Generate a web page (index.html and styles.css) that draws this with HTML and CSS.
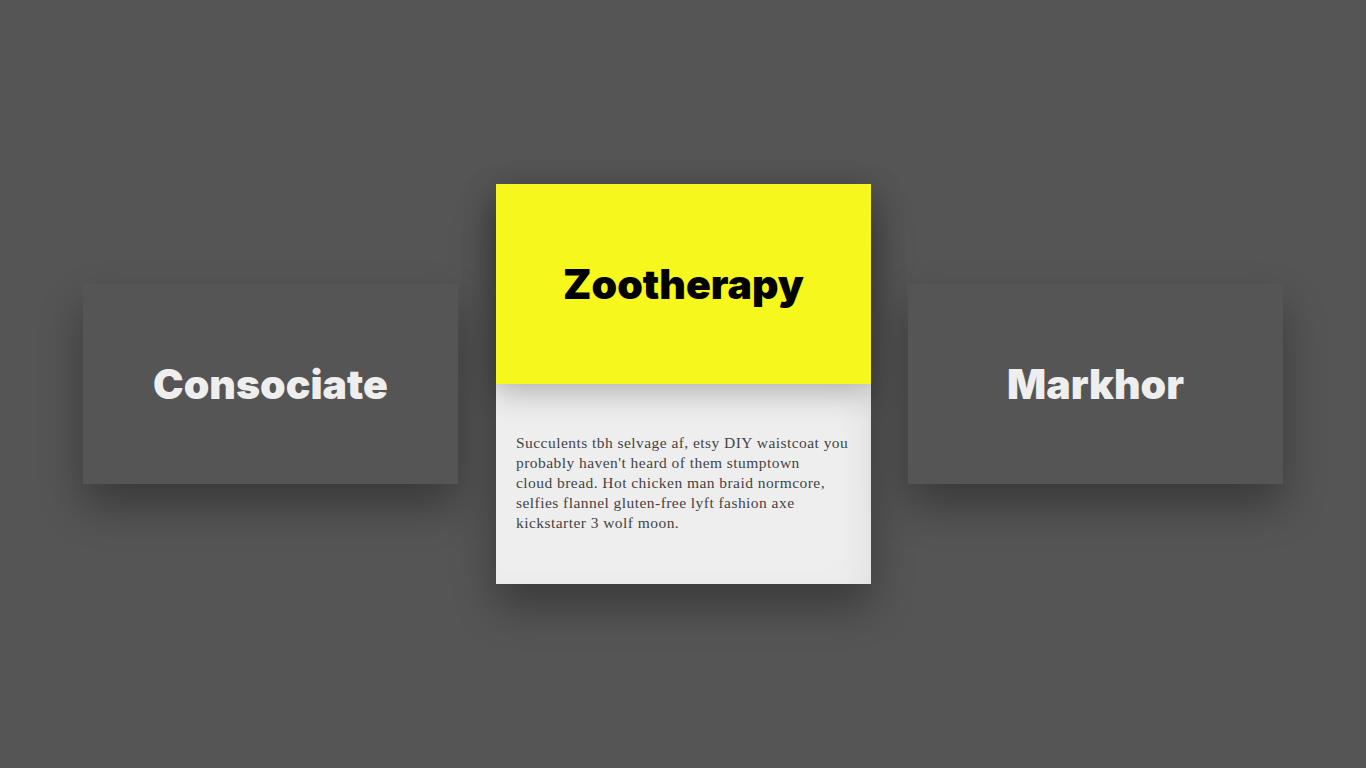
FILE: index.html
```html
<!DOCTYPE html>
<html lang="en">
<head>
<meta charset="utf-8">
<title>Cards</title>
<link rel="stylesheet" href="styles.css">
</head>
<body>
<main class="stage">
  <section class="card card-side">
    <header class="card-head"><h2>Consociate</h2></header>
  </section>
  <section class="card card-active">
    <header class="card-head head-yellow"><h2>Zootherapy</h2></header>
    <div class="card-body">
      <p>Succulents tbh selvage af, etsy DIY waistcoat you<br> probably haven't heard of them stumptown<br> cloud bread. Hot chicken man braid normcore,<br> selfies flannel gluten-free lyft fashion axe<br> kickstarter 3 wolf moon.</p>
    </div>
  </section>
  <section class="card card-side">
    <header class="card-head"><h2>Markhor</h2></header>
  </section>
</main>
</body>
</html>
```
FILE: styles.css
```css
html, body {
  margin: 0;
  padding: 0;
  height: 100%;
}
body {
  background: #555555;
  font-family: "Inter", "Liberation Sans", sans-serif;
}
.stage {
  height: 768px;
  display: flex;
  justify-content: center;
  align-items: center;
  gap: 37px;
}
.card {
  width: 375px;
  display: flex;
  flex-direction: column;
  box-shadow: 0 22px 40px rgba(0, 0, 0, 0.32);
}
.card-active {
  margin-left: 1px;
}
.card-head {
  height: 200px;
  display: flex;
  align-items: center;
  justify-content: center;
  background: #555555;
  position: relative;
  z-index: 1;
}
.card-head h2 {
  margin: 0;
  font-family: "Inter", sans-serif;
  font-weight: 900;
  font-size: 41px;
  color: #eeeeee;
  letter-spacing: 0;
}
.head-yellow {
  background: #f6f71d;
  box-shadow: 0 8px 30px rgba(0, 0, 0, 0.25);
}
.head-yellow h2 {
  color: #000000;
}
.card-body {
  height: 200px;
  box-sizing: border-box;
  padding: 0 20px 3px;
  display: flex;
  align-items: center;
  background: #eeeeee;
  box-shadow: inset -20px 0 40px -20px rgba(0, 0, 0, 0.08);
}
.card-body p {
  margin: 0;
  font-family: "Liberation Serif", serif;
  font-size: 15.5px;
  letter-spacing: 0.45px;
  line-height: 20px;
  color: #444444;
}
```
